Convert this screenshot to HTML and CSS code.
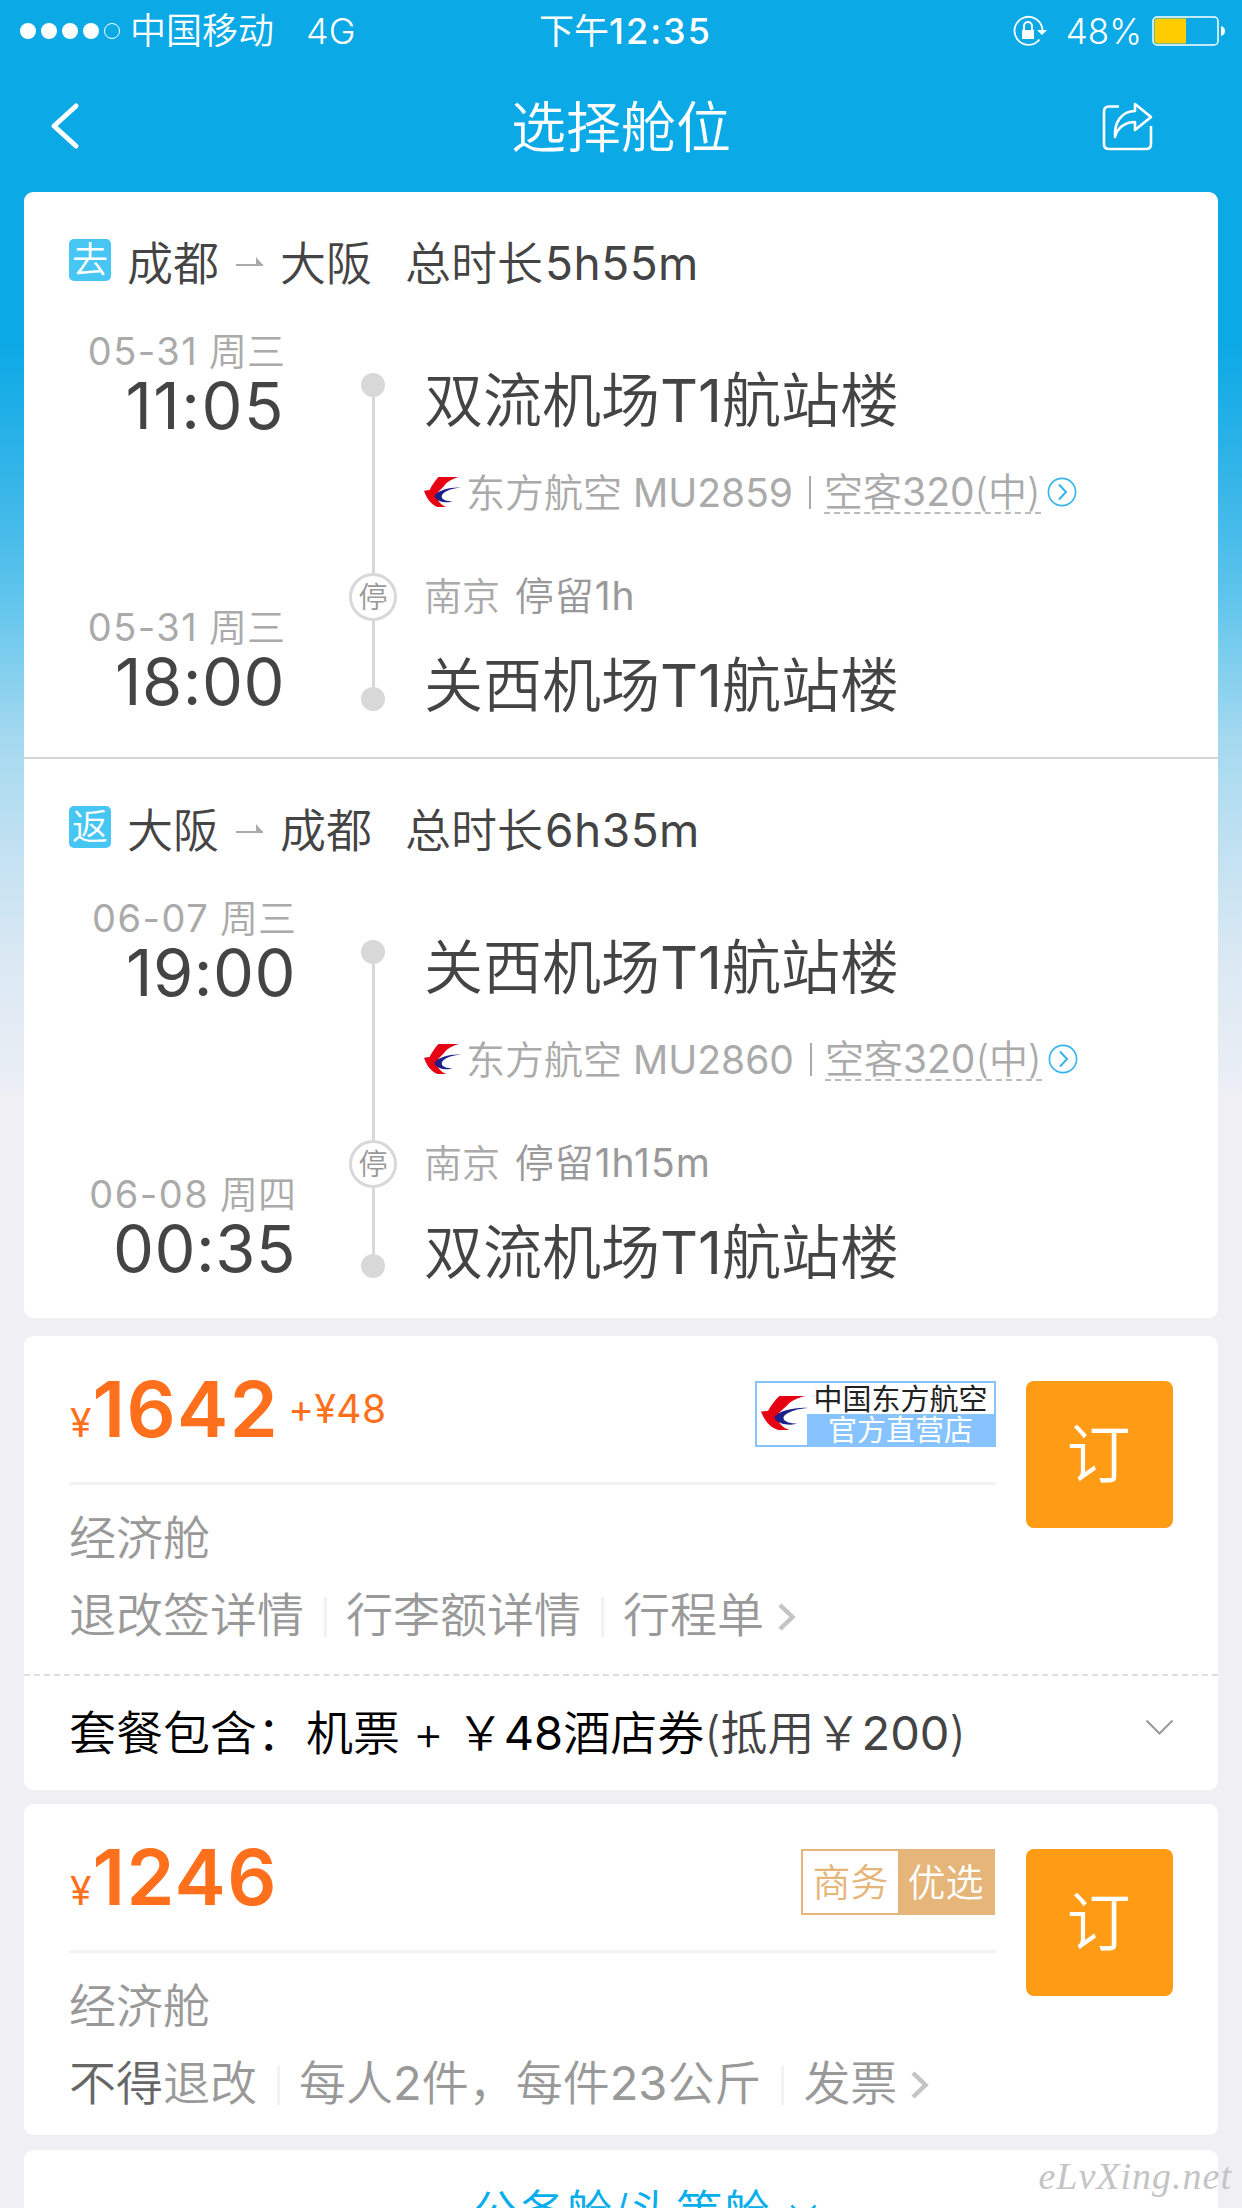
FILE: index.html
```
<!DOCTYPE html>
<html lang="zh-CN">

<head>
    <meta charset="utf-8">
    <title>选择舱位</title>
    <link rel="stylesheet" href="styles.css">
</head>

<body>
    <!-- shared icons -->
    <svg class="defs" width="0" height="0">
        <symbol id="mu" viewBox="0 0 46 37" preserveAspectRatio="none">
            <path d="M18 0 L43 0 C36 2 28 6 25 11 C20 16 15 20 16 24 C17 29 21 35 28 37 L17 37 C9 34 4 28 0 17 L7 16 C10 10 14 4 18 0Z" fill="#e60012" />
            <path d="M46 13 C33 14 22 19 22 24 C22 28 29 30 35 30 C29 33 14 30 13 23 C17 16 34 12 46 13Z" fill="#1d2088" />
        </symbol>
        <symbol id="next" viewBox="0 0 18 28">
            <path d="M2 2 L14.500 14 L2 26" fill="none" stroke="#c4c4c4" stroke-width="4.500" />
        </symbol>
        <symbol id="circle-next" viewBox="0 0 30 30">
            <circle cx="15" cy="15" r="13.600" fill="none" stroke="#35b5ec" stroke-width="1.600" />
            <path d="M12 7.500 L19 15 L12 22.500" fill="none" stroke="#35b5ec" stroke-width="2" />
        </symbol>
        <symbol id="half-arrow" viewBox="0 0 28 12">
            <path d="M0 8 H27 L20 0 V8" fill="#aaa" stroke="none" />
            <path d="M0 8 H27" stroke="#aaa" stroke-width="2" />
        </symbol>
    </svg>

    <div class="status">
        <div class="carrier">
            <i class="dot"></i><i class="dot"></i><i class="dot"></i><i class="dot"></i><i class="dot empty"></i>
            <span class="name">中国移动</span>
            <span class="net">4G</span>
        </div>
        <div class="clock">下午<b>12:35</b></div>
        <div class="power">
            <svg class="lock" width="34" height="32" viewBox="0 0 34 32">
                <path d="M29.500 15 A14 14 0 1 0 26.500 24.500" fill="none" stroke="#fff" stroke-width="1.800" />
                <path d="M24 15 H34 L29 20Z" fill="#fff" />
                <rect x="9" y="15" width="12" height="9" fill="#fff" />
                <path d="M11 15 V11 A4 4 0 0 1 19 11 V15" fill="none" stroke="#fff" stroke-width="2" />
            </svg>
            <span class="percent">48%</span>
            <svg width="74" height="30" viewBox="0 0 74 30">
                <rect x="1" y="1" width="65" height="28" rx="4" fill="none" stroke="#fff" stroke-width="1.500" />
                <path d="M4.500 2.500 H34 V27.500 H4.500 Q2.500 27.500 2.500 25.500 V4.500 Q2.500 2.500 4.500 2.500Z" fill="#fc0" />
                <path d="M69 10 Q73 11 73 15 T69 20Z" fill="#fff" />
            </svg>
        </div>
    </div>

    <div class="nav">
        <svg class="back" width="32" height="50" viewBox="0 0 32 50">
            <path d="M27 4 L5 24 L27 44" fill="none" stroke="#fff" stroke-width="5" stroke-linecap="round" stroke-linejoin="round" />
        </svg>
        <h1>选择舱位</h1>
        <svg class="share" width="52" height="50" viewBox="0 0 52 50">
            <path d="M17 4.500 H7 Q2 4.500 2 9.500 V42 Q2 47 7 47 H44 Q49 47 49 42 V24" fill="none" stroke="#fff" stroke-width="2.600" />
            <path d="M33 2 L49 15 L33 28 V20 C23 20 15 26 13 35 C12 20 20 9 33 9Z" fill="none" stroke="#fff" stroke-width="2.600" stroke-linejoin="round" />
        </svg>
    </div>

    <div class="card flight">
        <div class="leg go">
            <div class="route">
                <span class="badge">去</span>
                <span class="city">成都</span>
                <svg width="28" height="12"><use href="#half-arrow" /></svg>
                <span class="city">大阪</span>
                <span class="total">总时长<span>5h55m</span></span>
            </div>
            <div class="detail">
                <div class="times">
                    <div class="date"><span>05-31</span> 周三</div>
                    <div class="time early">11:05</div>
                    <div class="date arrive"><span>05-31</span> 周三</div>
                    <div class="time">18:00</div>
                </div>
                <div class="line">
                    <i class="point"></i><i class="bar long"></i><i class="stop">停</i><i class="bar"></i><i class="point"></i>
                </div>
                <div class="places">
                    <div class="airport">双流机场<span class="num">T1</span>航站楼</div>
                    <div class="plane">
                        <svg width="37" height="30"><use href="#mu" /></svg>
                        <span class="company">东方航空 <span class="num">MU2859</span></span>
                        <i class="pipe"></i>
                        <span class="model">空客<span class="num">320</span>(中)</span>
                        <svg width="30" height="30"><use href="#circle-next" /></svg>
                    </div>
                    <div class="via">南京 <span>停留<span class="num">1h</span></span></div>
                    <div class="airport">关西机场<span class="num">T1</span>航站楼</div>
                </div>
            </div>
        </div>
        <div class="leg return">
            <div class="route">
                <span class="badge">返</span>
                <span class="city">大阪</span>
                <svg width="28" height="12"><use href="#half-arrow" /></svg>
                <span class="city">成都</span>
                <span class="total">总时长<span>6h35m</span></span>
            </div>
            <div class="detail">
                <div class="times">
                    <div class="date"><span>06-07</span> 周三</div>
                    <div class="time">19:00</div>
                    <div class="date arrive"><span>06-08</span> 周四</div>
                    <div class="time">00:35</div>
                </div>
                <div class="line">
                    <i class="point"></i><i class="bar long"></i><i class="stop">停</i><i class="bar"></i><i class="point"></i>
                </div>
                <div class="places">
                    <div class="airport">关西机场<span class="num">T1</span>航站楼</div>
                    <div class="plane">
                        <svg width="37" height="30"><use href="#mu" /></svg>
                        <span class="company">东方航空 <span class="num">MU2860</span></span>
                        <i class="pipe"></i>
                        <span class="model">空客<span class="num">320</span>(中)</span>
                        <svg width="30" height="30"><use href="#circle-next" /></svg>
                    </div>
                    <div class="via">南京 <span>停留<span class="num">1h15m</span></span></div>
                    <div class="airport">双流机场<span class="num">T1</span>航站楼</div>
                </div>
            </div>
        </div>
    </div>

    <div class="card offer">
        <div class="main">
            <div class="info">
                <div class="top">
                    <div class="price"><small>¥</small><b>1642</b><em>+¥48</em></div>
                    <div class="tag-mu">
                        <svg width="47" height="34"><use href="#mu" /></svg>
                        <div class="words"><span>中国东方航空</span><span class="shop">官方直营店</span></div>
                    </div>
                </div>
                <div class="cabin">经济舱</div>
                <div class="rules">
                    <span>退改签详情</span><span>行李额详情</span><span>行程单</span>
                    <svg width="18" height="28"><use href="#next" /></svg>
                </div>
            </div>
            <button class="book">订</button>
        </div>
        <div class="package">
            <p>套餐包含：<i class="ticket">机票</i><i class="plus">+</i>￥<i class="num">48</i>酒店券<i class="note">(抵用￥<i class="num">200</i>)</i></p>
            <svg width="29" height="17" viewBox="0 0 29 17">
                <path d="M1.500 1.500 L14.500 14.500 L27.500 1.500" fill="none" stroke="#999" stroke-width="2" />
            </svg>
        </div>
    </div>

    <div class="card offer">
        <div class="main">
            <div class="info">
                <div class="top">
                    <div class="price"><small>¥</small><b>1246</b></div>
                    <div class="tag-biz"><span>商务</span><span class="best">优选</span></div>
                </div>
                <div class="cabin">经济舱</div>
                <div class="rules">
                    <span><strong>不得</strong>退改</span><span>每人<i class="num">2</i>件，每件<i class="num">23</i>公斤</span><span>发票</span>
                    <svg width="18" height="28"><use href="#next" /></svg>
                </div>
            </div>
            <button class="book">订</button>
        </div>
    </div>

    <div class="card more">
        <span>公务舱/头等舱</span>
        <svg width="27" height="17" viewBox="0 0 27 17">
            <path d="M1.500 1.500 L13.500 13.500 L25.500 1.500" fill="none" stroke="#08aeea" stroke-width="2.500" />
        </svg>
    </div>

    <div class="watermark">eLvXing.net</div>
</body>

</html>
```
FILE: styles.css
```
* {
    box-sizing: border-box;
}

html {
    height: 2208px;
    overflow: hidden;
    background: #efeff4;
}

body {
    position: relative;
    width: 1242px;
    height: 2208px;
    margin: 0;
    overflow: hidden;
    background: linear-gradient(#0ba9e6 0, #0ba9e6 340px, #35b5e8 480px, #5cc4ec 590px, #a5d9ef 740px, #c9e3f2 880px, #dce9f3 970px, #ebeef5 1088px, #efeff4 1092px);
    font-family: Inter, "Noto Sans CJK SC", sans-serif;
    font-weight: 350;
    color: #444;
    white-space: nowrap;
}

i,
em {
    font-style: normal;
}

svg {
    display: block;
    flex: none;
}

.defs {
    position: absolute;
}

/* latin digits look thin next to the chinese text */
.num {
    font-weight: 400;
}

/* status bar */
.status {
    display: grid;
    grid-template-columns: 1fr auto 1fr;
    align-items: center;
    height: 62px;
    padding: 0 16px 0 20px;
    color: #fff;
    font-size: 36px;
    line-height: 62px;
}

.carrier,
.power {
    display: flex;
    align-items: center;
}

.power {
    justify-content: flex-end;
}

.dot {
    width: 16px;
    height: 16px;
    margin-right: 5px;
    border-radius: 50%;
    background: #fff;
}

.dot.empty {
    border: 1px solid #fff;
    background: none;
}

.name {
    margin-left: 5px;
}

.net {
    margin-left: 32px;
}

.clock {
    padding-left: 5px;
    font-weight: 400;
    font-size: 35px;
}

.clock b {
    font-size: 36px;
    font-weight: 500;
    letter-spacing: 2px;
}

.percent {
    margin: 0 10px 0 19px;
    font-size: 35px;
}

/* nav */
.nav {
    display: grid;
    grid-template-columns: 1fr auto 1fr;
    align-items: center;
    height: 130px;
    padding: 0 49px;
}

.nav h1 {
    margin: 0;
    color: #fff;
    font-size: 55px;
    font-weight: 350;
    line-height: 128px;
}

.share {
    justify-self: end;
    margin-right: 39px;
}

.card {
    margin: 0 24px;
    border-radius: 9px;
    background: #fff;
}

/* flight legs */
.flight {
    height: 1126px;
}

.leg {
    height: 567px;
    padding-top: 36px;
}

.go {
    border-bottom: 2px solid #d5d5d5;
}

.route {
    display: flex;
    align-items: center;
    height: 70px;
    padding-left: 45px;
    font-size: 46px;
    line-height: 70px;
}

.badge {
    width: 42px;
    height: 42px;
    margin: 0 16px 7px 0;
    border-radius: 5px;
    background: #48c6f3;
    color: #fff;
    font-size: 36px;
    line-height: 42px;
    text-align: center;
}

.route svg {
    margin: 0 16px 0 17px;
}

.total {
    margin-left: 33px;
}

.total span {
    margin-left: 2px;
    font-weight: 400;
    letter-spacing: 0.5px;
}

.detail {
    display: flex;
}

.times {
    width: 261px;
    padding-top: 28px;
    text-align: right;
}

.return .times {
    width: 272px;
}

.date {
    height: 50px;
    color: #aaa;
    font-size: 38px;
    line-height: 50px;
}

.date span {
    font-weight: 400;
    letter-spacing: 1.5px;
}

.time {
    height: 60px;
    font-size: 65px;
    font-weight: 380;
    line-height: 60px;
    letter-spacing: 0.5px;
}

.early {
    letter-spacing: 1.5px;
}

.arrive {
    margin-top: 166px;
}

.line {
    display: flex;
    flex-direction: column;
    align-items: center;
    width: 48px;
    margin: 75px 0 0 64px;
}

.return .line {
    margin-left: 53px;
}

.point {
    width: 24px;
    height: 24px;
    border-radius: 50%;
    background: #d8d8d8;
}

.bar {
    width: 3px;
    height: 66px;
    background: #d8d8d8;
}

.bar.long {
    height: 176px;
}

.stop {
    width: 48px;
    height: 48px;
    border: 3px solid #d8d8d8;
    border-radius: 50%;
    color: #999;
    font-size: 29px;
    line-height: 43px;
    text-align: center;
}

.places {
    margin-left: 27px;
}

.airport {
    margin-top: 63px;
    height: 80px;
    font-size: 59px;
    line-height: 80px;
}

.plane {
    display: flex;
    align-items: center;
    height: 60px;
    margin-top: 21px;
    color: #aaa;
    font-size: 39px;
    line-height: 61px;
}

.company {
    margin-left: 5px;
}

.pipe {
    width: 2px;
    height: 33px;
    margin: 0 13px 0 16px;
    background: #aaa;
}

.model {
    height: 44px;
    margin-right: 6px;
    border-bottom: 2px dashed #bbb;
    line-height: 44px;
}

.via {
    height: 60px;
    margin-top: 44px;
    color: #aaa;
    font-size: 38px;
    line-height: 60px;
}

.via > span {
    margin-left: 4px;
    color: #999;
    font-size: 39px;
    letter-spacing: 1px;
}

.via + .airport {
    margin-top: 20px;
}

/* ticket offers */
.offer {
    margin-top: 18px;
}

.offer + .offer {
    margin-top: 14px;
}

.main {
    display: flex;
    gap: 30px;
    height: 331px;
    padding: 45px 45px 0;
}

.info {
    width: 927px;
}

.top {
    display: flex;
    justify-content: space-between;
    height: 104px;
    border-bottom: 3px solid #f2f2f2;
}

.price {
    height: 66px;
    padding-left: 1px;
    color: #ff6f1c;
    line-height: 56px;
}

.price small,
.price em {
    font-size: 39px;
    font-weight: 400;
}

.price b {
    margin-left: 1px;
    font-size: 77px;
    font-weight: 600;
    letter-spacing: 1.4px;
}

.price em {
    position: relative;
    top: -14px;
    margin-left: 9px;
    letter-spacing: 0.5px;
}

.tag-mu {
    display: flex;
    width: 241px;
    height: 66px;
    border: 2px solid #87c3ff;
    background: #fff;
}

.tag-mu svg {
    margin: 13px -1px 0 4px;
}

.words {
    width: 188px;
    color: #222;
    font-size: 29px;
    font-weight: 400;
}

.words span {
    display: block;
    height: 31px;
    line-height: 33px;
    text-align: center;
}

.words .shop {
    background: #87c3ff;
    color: #fff;
}

.tag-biz {
    display: flex;
    width: 194px;
    height: 66px;
    margin-right: 1px;
    border: 2px solid #e5b57a;
    color: #e5b57a;
    font-size: 38px;
    line-height: 62px;
    text-align: center;
}

.tag-biz span {
    flex: 1;
}

.tag-biz .best {
    background: #e5b57a;
    color: #fff;
}

.cabin {
    margin-top: 18px;
    height: 70px;
    color: #999;
    font-size: 47px;
    line-height: 70px;
}

.rules {
    display: flex;
    align-items: center;
    height: 70px;
    margin-top: 7px;
    color: #999;
    font-size: 47px;
    line-height: 70px;
}

.rules span + span {
    display: flex;
    align-items: center;
}

.rules span + span::before {
    content: "";
    width: 3px;
    height: 40px;
    margin: 4px 19px 0 20px;
    background: #f2f2f2;
}

.rules strong {
    color: #666;
    font-weight: 350;
}

.rules svg {
    margin: 4px 0 0 14px;
}

.book {
    width: 147px;
    height: 147px;
    padding: 0 2px 2px 0;
    border: 0;
    border-radius: 8px;
    background: #ff9b14;
    color: #fff;
    font: inherit;
    font-size: 64px;
    line-height: 142px;
}

.package {
    display: flex;
    align-items: center;
    justify-content: space-between;
    height: 116px;
    margin-top: 7px;
    padding: 0 44px 0 45px;
    border-top: 2px dashed #ddd;
    color: #000;
    font-size: 47px;
}

.package p {
    margin: 0;
    line-height: 114px;
}

.package svg {
    margin-bottom: 12px;
}

.ticket {
    margin-left: 2px;
}

.plus {
    margin: 0 13px;
}

.note {
    color: #444;
}

.more {
    display: flex;
    justify-content: center;
    height: 110px;
    margin-top: 15px;
    padding: 27px 0 0 46px;
    color: #08aeea;
    font-size: 47px;
    line-height: 70px;
}

.more svg {
    margin: 27px 0 0 20px;
}

.watermark {
    position: absolute;
    right: 10px;
    bottom: 10px;
    color: #c4c4c4;
    font: italic 38px "Liberation Serif", serif;
    letter-spacing: 1px;
}
```
